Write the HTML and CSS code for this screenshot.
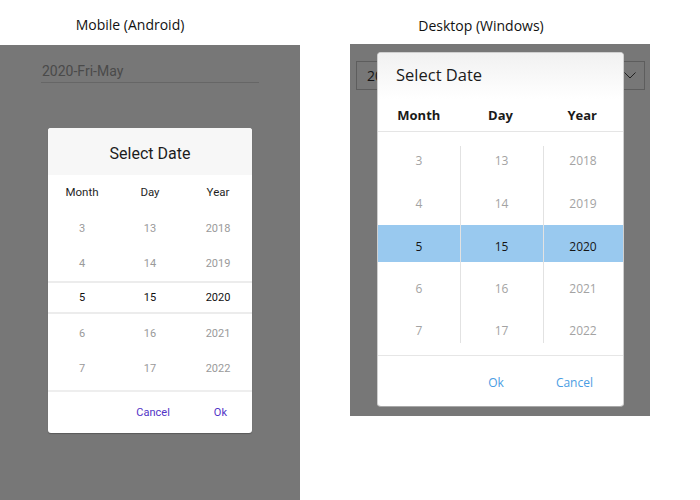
FILE: index.html
```html
<!DOCTYPE html>
<html lang="en">
<head>
<meta charset="utf-8">
<title>Date picker</title>
<link rel="stylesheet" href="styles.css">
</head>
<body>
<div class="page">
  <section class="col col-android">
    <div class="caption caption-android">Mobile (Android)</div>
    <div class="screen screen-android">
      <div class="entry">2020-Fri-May</div>
      <div class="a-dialog">
        <div class="a-title">Select Date</div>
        <div class="a-heads">
          <div class="a-head">Month</div>
          <div class="a-head">Day</div>
          <div class="a-head">Year</div>
        </div>
        <div class="a-wheel">
          <div class="a-row"><span>3</span><span>13</span><span>2018</span></div>
          <div class="a-row"><span>4</span><span>14</span><span>2019</span></div>
          <div class="a-row a-row-sel"><span>5</span><span>15</span><span>2020</span></div>
          <div class="a-row"><span>6</span><span>16</span><span>2021</span></div>
          <div class="a-row"><span>7</span><span>17</span><span>2022</span></div>
        </div>
        <div class="a-footer">
          <span class="a-btn">Cancel</span>
          <span class="a-btn">Ok</span>
        </div>
      </div>
    </div>
  </section>
  <section class="col col-windows">
    <div class="caption caption-windows">Desktop (Windows)</div>
    <div class="screen screen-windows">
      <div class="combo">
        <span class="combo-text">2020-Fri-May</span>
        <svg class="chevron" width="12" height="7" viewBox="0 0 12 7"><polyline points="0.5,0.5 6,6 11.5,0.5" fill="none" stroke="#222" stroke-width="1"/></svg>
      </div>
      <div class="w-dialog">
        <div class="w-title">Select Date</div>
        <div class="w-heads">
          <div class="w-head">Month</div>
          <div class="w-head">Day</div>
          <div class="w-head">Year</div>
        </div>
        <div class="w-wheel">
          <div class="w-col">
            <div class="w-cell">3</div>
            <div class="w-cell">4</div>
            <div class="w-cell w-sel">5</div>
            <div class="w-cell">6</div>
            <div class="w-cell">7</div>
          </div>
          <div class="w-col w-col-sep">
            <div class="w-cell">13</div>
            <div class="w-cell">14</div>
            <div class="w-cell w-sel">15</div>
            <div class="w-cell">16</div>
            <div class="w-cell">17</div>
          </div>
          <div class="w-col w-col-sep">
            <div class="w-cell">2018</div>
            <div class="w-cell">2019</div>
            <div class="w-cell w-sel">2020</div>
            <div class="w-cell">2021</div>
            <div class="w-cell">2022</div>
          </div>
        </div>
        <div class="w-footer">
          <span class="w-btn">Ok</span>
          <span class="w-btn">Cancel</span>
        </div>
      </div>
    </div>
  </section>
</div>
</body>
</html>
```

FILE: styles.css
```css
* { box-sizing: border-box; }
html, body { margin: 0; padding: 0; background: #fff; }
body { width: 700px; height: 500px; overflow: hidden; font-family: "Open Sans", "Noto Sans", sans-serif; }

.page { display: flex; align-items: flex-start; }
.col { width: 300px; display: flex; flex-direction: column; }
.col-windows { margin-left: 50px; }

.caption { display: flex; align-items: center; justify-content: center; font-size: 14px; color: #111; padding-top: 3px; }
.caption-android { height: 45px; padding-right: 40px; }
.caption-windows { height: 44px; padding-right: 38px; padding-top: 6px; }

.screen { background: #777; position: relative; }
.screen-android { height: 455px; padding: 17px 41px 0 41px; font-family: Roboto, "Noto Sans", sans-serif; }
.screen-windows { height: 372px; padding: 17px 5px 0 6px; }

/* Android */
.entry { font-size: 14px; color: #4a4a4a; height: 21px; line-height: 18px; padding-left: 1px; border-bottom: 1px solid #666; }

.a-dialog { position: absolute; left: 48px; top: 83px; width: 204px; height: 305px; background: #fff; border-radius: 3px; box-shadow: 0 1px 1px rgba(0,0,0,0.25); overflow: hidden; display: flex; flex-direction: column; }
.a-title { height: 47px; background: #f7f7f7; display: flex; align-items: center; justify-content: center; font-size: 16px; color: #1c1c1c; padding-top: 3px; }
.a-heads { height: 33px; display: grid; grid-template-columns: repeat(3, 1fr); align-items: center; padding-top: 1px; }
.a-head { text-align: center; font-size: 11.5px; color: #1f1f1f; }
.a-wheel { padding-top: 3px; }
.a-row { height: 35px; display: grid; grid-template-columns: repeat(3, 1fr); align-items: center; font-size: 11px; color: #9a9a9a; }
.a-row span { text-align: center; }
.a-row-sel { color: #111; border-top: 2px solid #ececec; border-bottom: 2px solid #ececec; height: 33px; margin-bottom: 2px; }
.a-footer { margin-top: 4px; border-top: 2px solid #eeeeee; flex: 1; display: flex; align-items: center; justify-content: flex-end; gap: 44px; padding: 0 25px 0 0; }
.a-btn { font-size: 11px; color: #5133c6; }

/* Windows */
.combo { height: 29px; border: 1px solid #5d5d5d; display: flex; align-items: center; justify-content: space-between; padding: 0 8px 0 10px; }
.combo-text { font-size: 14px; color: #141414; white-space: nowrap; }
.chevron { display: block; }

.w-dialog { position: absolute; left: 27px; top: 8px; width: 247px; height: 355px; background: #fff; border-radius: 4px; border: 1px solid #cfcfcf; border-bottom-color: #a8a8a8; overflow: hidden; display: flex; flex-direction: column; }
.w-title { height: 46px; background: linear-gradient(#f1f1f1, #ffffff); display: flex; align-items: center; padding: 0 0 4px 18px; font-size: 16.5px; color: #1b1b1b; }
.w-heads { height: 33px; display: grid; grid-template-columns: repeat(3, 1fr); align-items: center; border-bottom: 1px solid #e5e5e5; }
.w-head { text-align: center; font-size: 13px; font-weight: 700; color: #1a1a1a; }
.w-wheel { display: grid; grid-template-columns: 82px 83px 1fr; padding-top: 8px; }
.w-col { position: relative; }
.w-col-sep::before { content: ""; position: absolute; left: 0; top: 6px; bottom: 10px; width: 1px; background: #e2e2e2; z-index: 1; }
.w-cell { height: 42.5px; display: flex; align-items: center; justify-content: center; font-size: 12px; color: #a3a3a3; padding-bottom: 1px; }
.w-sel { color: #161616; background: linear-gradient(#99c9ef, #99c9ef) 0 -1px / 100% 38px no-repeat; padding-bottom: 0; padding-top: 1px; }
.w-footer { margin-top: 2px; border-top: 1px solid #e6e6e6; flex: 1; display: flex; align-items: center; justify-content: flex-end; gap: 52px; padding: 3px 30px 0 0; }
.w-btn { font-size: 12px; color: #4a9de3; }
```
